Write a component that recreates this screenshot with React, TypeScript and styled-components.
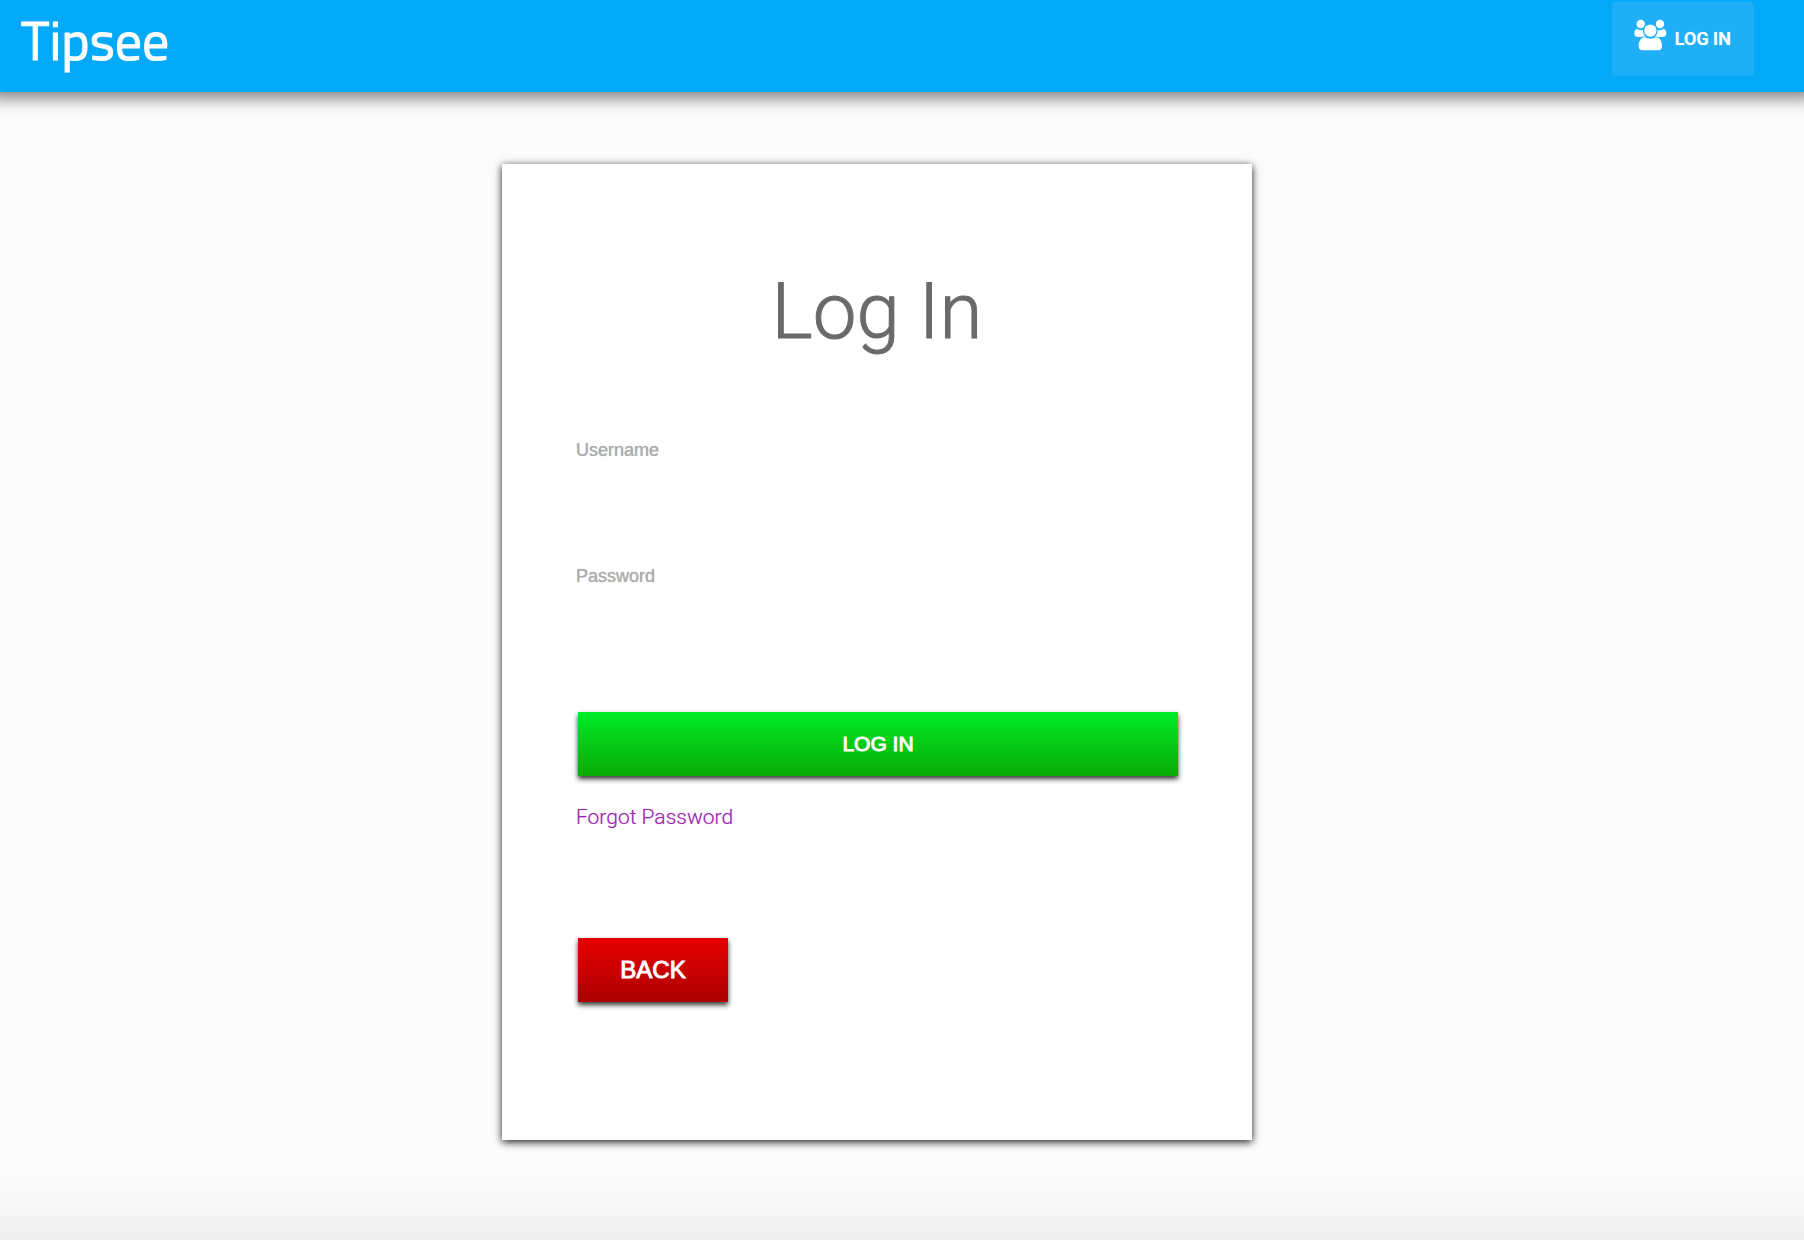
import React from "react";
import styled, { createGlobalStyle } from "styled-components";

const GlobalStyle = createGlobalStyle`
  * { box-sizing: border-box; }
  body { margin: 0; background: #fcfcfc; }
  button, input { font: inherit; }
`;

const Page = styled.div`
  min-height: 100vh;
  display: flex;
  flex-direction: column;
  overflow-x: clip;
  background: linear-gradient(to top, #ededed 0, #f7f7f7 32px, #fcfcfc 72px);
  font-family: "Liberation Sans", Arial, sans-serif;
`;

const Header = styled.header`
  height: 92px;
  padding: 2px 50px 0 21px;
  display: flex;
  align-items: flex-start;
  justify-content: space-between;
  background: #04a9f8;
  box-shadow: 0 -6px 16px 12px rgba(0, 0, 0, 0.5);
`;

const Brand = styled.a`
  color: #ffffff;
  font-family: "Titillium Web", "Open Sans", sans-serif;
  font-size: 54px;
  line-height: 76px;
  -webkit-text-stroke: 1px #ffffff;
  text-decoration: none;
`;

const NavButton = styled.button`
  height: 74px;
  padding: 0 23px 2px 22px;
  display: flex;
  align-items: center;
  gap: 8px;
  border: 0;
  border-radius: 4px;
  background: #1eaff7;
  color: #ffffff;
  font-family: Roboto, sans-serif;
  font-size: 18px;
  font-weight: 500;
  text-shadow: 0 0 1px #ffffff;
  cursor: pointer;

  svg {
    margin-bottom: 6px;
  }
`;

const Main = styled.main`
  flex: 1;
  padding: 72px 50px 100px 0;
`;

const Card = styled.section`
  max-width: 750px;
  margin: 0 auto;
  padding: 93px 74px 138px;
  background: #ffffff;
  box-shadow: 0 2px 8px rgba(0, 0, 0, 0.9);
`;

const Title = styled.h1`
  margin: 0 0 71px;
  color: #6a6a6a;
  font-family: Roboto, sans-serif;
  font-size: 78px;
  font-weight: 300;
  line-height: 110px;
  text-align: center;
  -webkit-text-stroke: 1px #6a6a6a;
`;

const Form = styled.form`
  display: flex;
  flex-direction: column;
  align-items: flex-start;
`;

const Field = styled.div`
  width: 100%;
  height: 126px;
  display: flex;
  flex-direction: column;
`;

const Label = styled.label`
  color: #acacac;
  font-size: 18px;
  line-height: 24px;
  text-shadow: 0 0 1px #acacac;
`;

const Input = styled.input`
  height: 50px;
  padding: 0;
  border: 0;
  outline: 0;
  background: transparent;
  color: #6a6a6a;
  font-size: 22px;
`;

const ActionButton = styled.button<{ $from: string; $to: string; $size: number }>`
  height: 64px;
  margin: 0 0 0 2px;
  padding: 0;
  border: 0;
  background: linear-gradient(${(p) => p.$from}, ${(p) => p.$to});
  box-shadow: 0 3px 5px rgba(0, 0, 0, 0.8);
  color: #ffffff;
  font-size: ${(p) => p.$size}px;
  -webkit-text-stroke: 1px #ffffff;
  cursor: pointer;
`;

const SubmitButton = styled(ActionButton)`
  align-self: stretch;
  margin-top: 22px;
`;

const BackButton = styled(ActionButton)`
  width: 150px;
`;

const ForgotLink = styled.a`
  margin: 25px 0 105px;
  color: #9c27b0;
  font-family: Roboto, sans-serif;
  font-size: 21px;
  font-weight: 300;
  line-height: 32px;
  text-decoration: none;
  text-shadow: 0 0 1px rgba(156, 39, 176, 0.5);
`;

const GroupIcon = () => (
  <svg width="33" height="32" viewBox="0 0 99 96" fill="#ffffff" aria-hidden="true">
    <circle cx="20" cy="15" r="12.5" />
    <circle cx="78" cy="15" r="12.5" />
    <path d="M9 29Q20 37 27 32Q26 46 36 53Q26 52 20 54H12Q1 54 1 43Q1 32 9 29Z" />
    <path d="M89 29Q78 37 71 32Q72 46 62 53Q72 52 78 54H86Q97 54 97 43Q97 32 89 29Z" />
    <circle cx="49" cy="35" r="18.5" />
    <path d="M31 54Q49 65 67 54Q84 58 84 82Q84 94 72 94H26Q14 94 14 82Q14 58 31 54Z" />
  </svg>
);

export default function App() {
  return (
    <Page>
      <GlobalStyle />
      <Header>
        <Brand href="#">Tipsee</Brand>
        <NavButton type="button">
          <GroupIcon />
          LOG IN
        </NavButton>
      </Header>
      <Main>
        <Card>
          <Title>Log In</Title>
          <Form onSubmit={(e) => e.preventDefault()}>
            <Field>
              <Label htmlFor="username">Username</Label>
              <Input id="username" type="text" autoComplete="username" />
            </Field>
            <Field>
              <Label htmlFor="password">Password</Label>
              <Input id="password" type="password" autoComplete="current-password" />
            </Field>
            <SubmitButton type="submit" $from="#00eb28" $to="#09ab04" $size={21}>
              LOG IN
            </SubmitButton>
            <ForgotLink href="#">Forgot Password</ForgotLink>
            <BackButton type="button" $from="#e60000" $to="#ad0000" $size={24}>
              BACK
            </BackButton>
          </Form>
        </Card>
      </Main>
    </Page>
  );
}
